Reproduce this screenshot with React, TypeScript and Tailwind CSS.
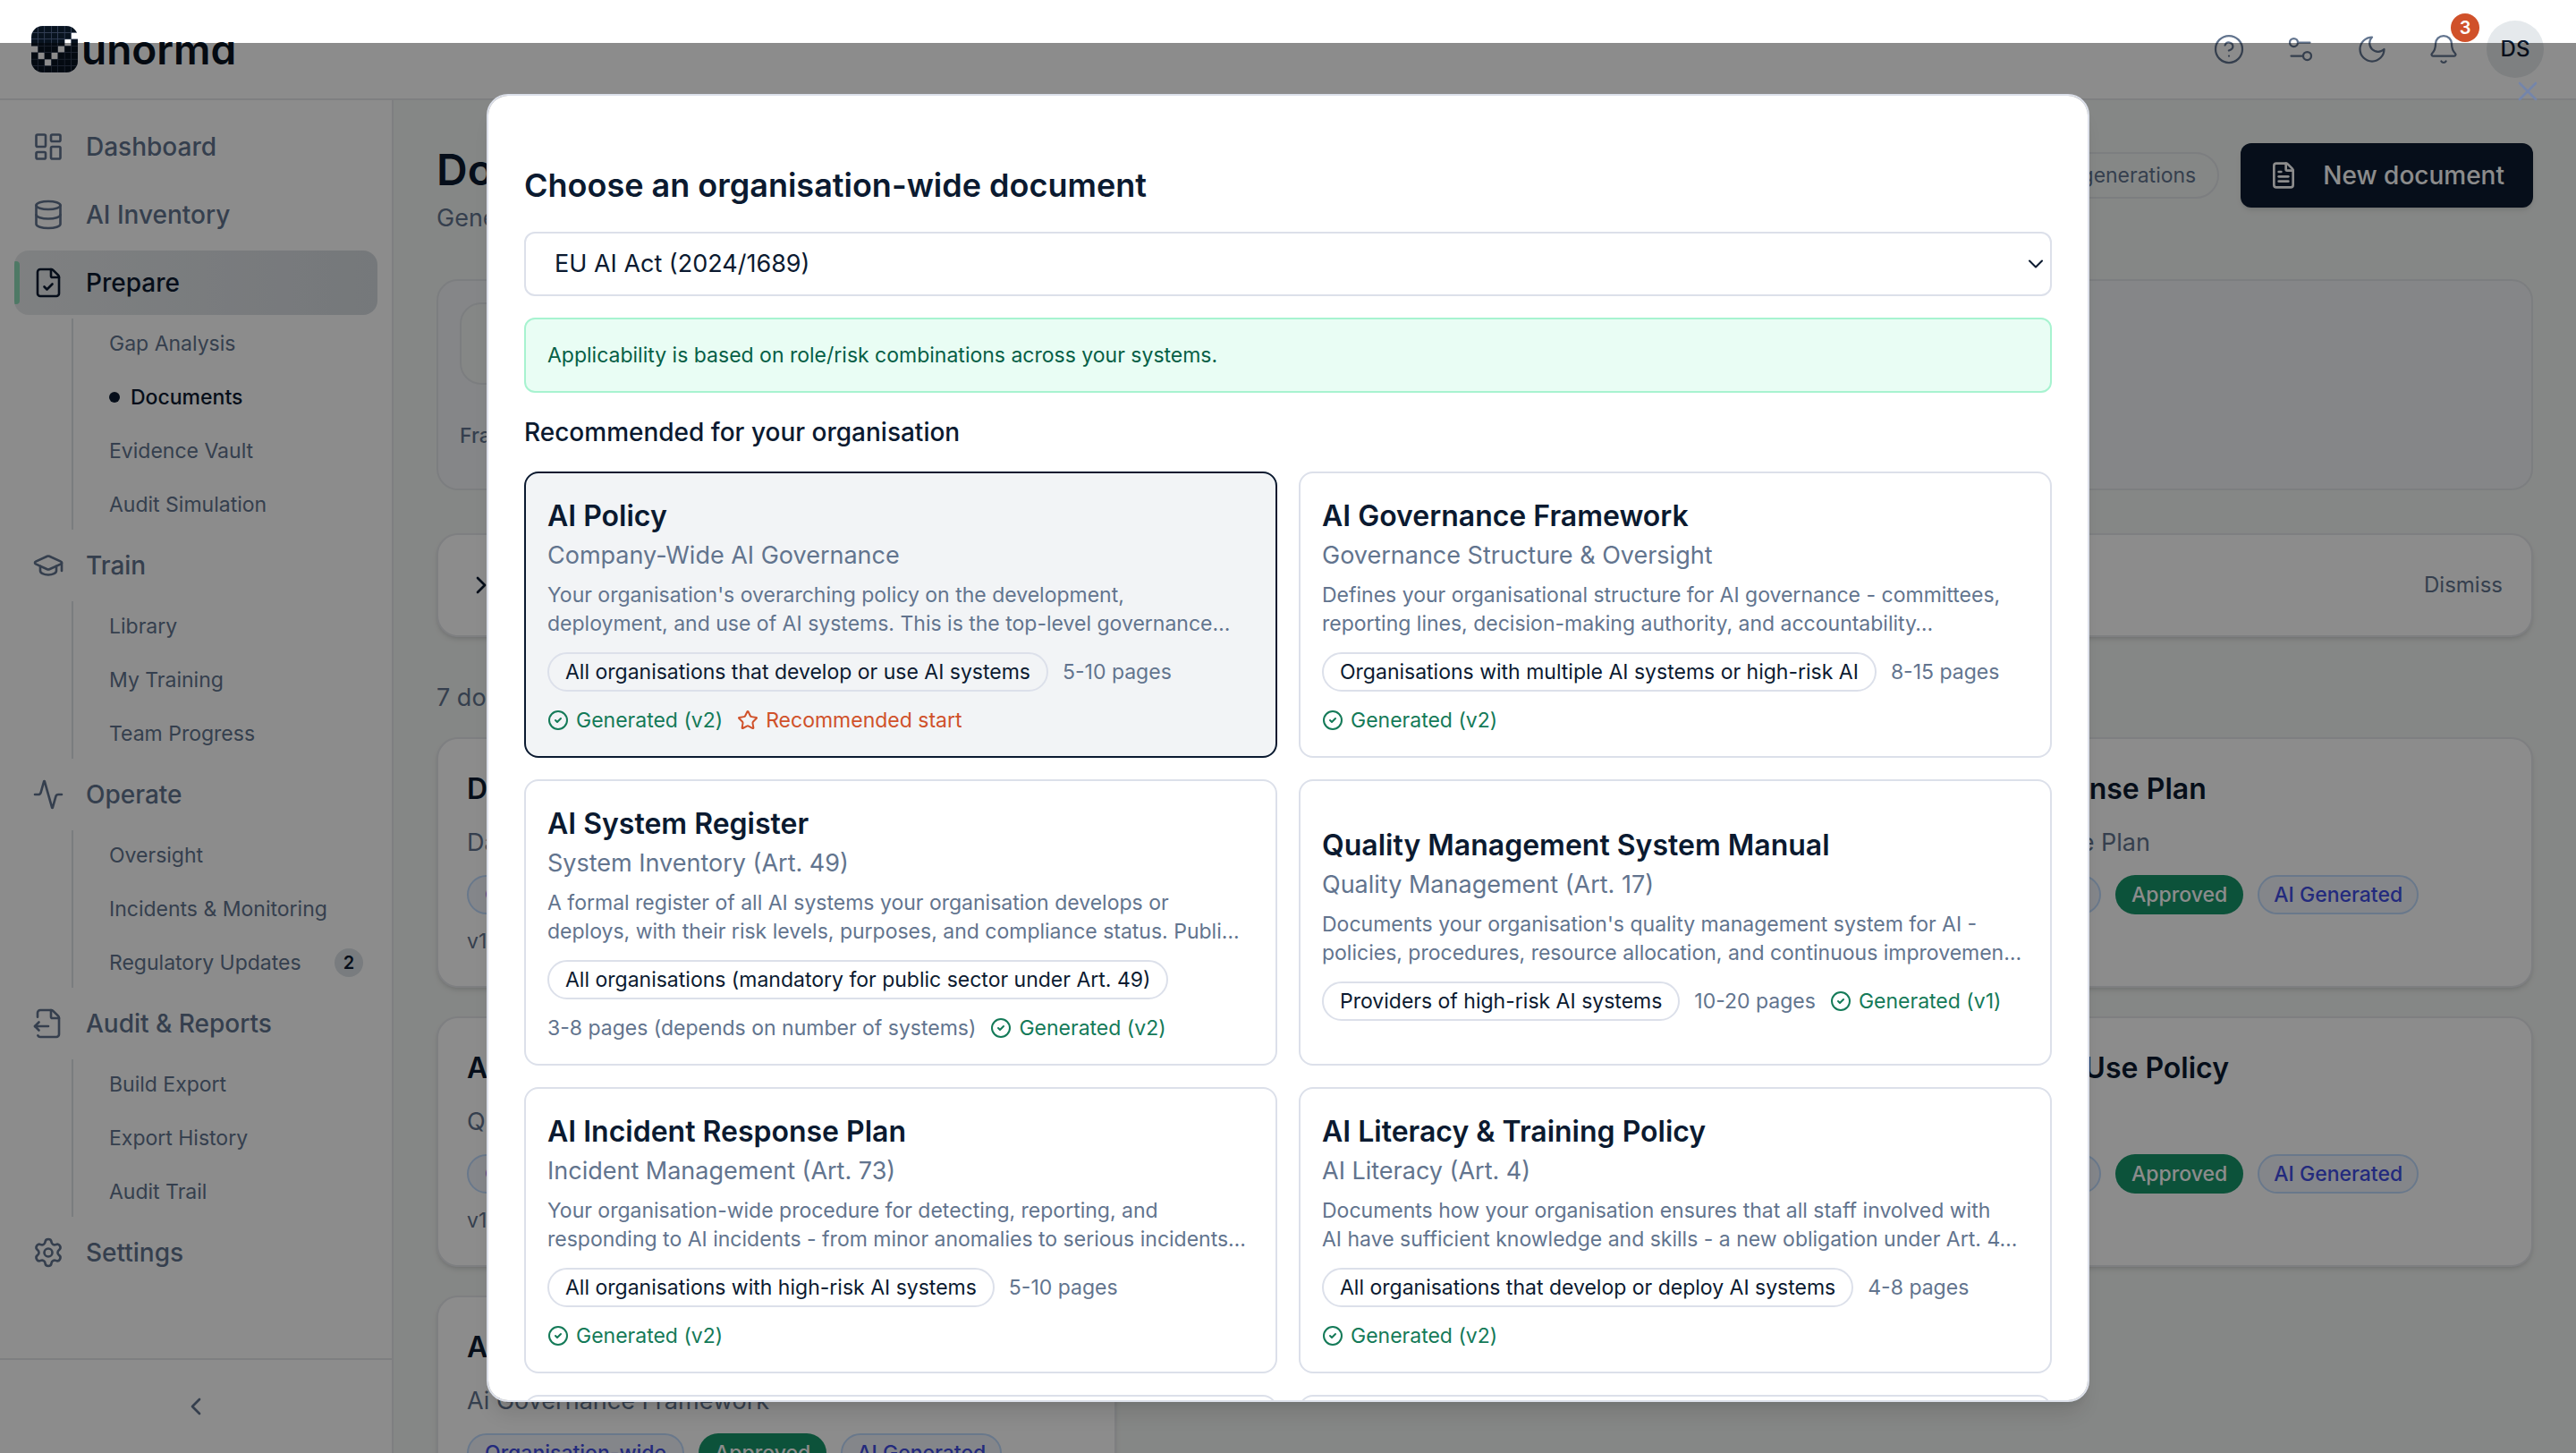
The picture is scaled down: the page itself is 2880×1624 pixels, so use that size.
import React from 'react'
import {
  Activity,
  Bell,
  ChevronDown,
  ChevronLeft,
  ChevronRight,
  CircleCheck,
  CircleQuestionMark,
  Database,
  FileCheck,
  FileOutput,
  FileText,
  GraduationCap,
  LayoutDashboard,
  Settings,
  Settings2,
  Star,
  X,
  type LucideIcon,
} from 'lucide-react'

interface NavSection {
  label: string
  icon: LucideIcon
  active?: boolean
  children?: { label: string; active?: boolean; badge?: string }[]
}

interface TemplateOption {
  title: string
  category: string
  description: string
  audience: string
  pages: string
  version: string
  selected?: boolean
  recommended?: boolean
}

interface DocumentItem {
  title: string
  subtitle: string
}

const navigation: NavSection[] = [
  { label: 'Dashboard', icon: LayoutDashboard },
  { label: 'AI Inventory', icon: Database },
  {
    label: 'Prepare',
    icon: FileCheck,
    active: true,
    children: [
      { label: 'Gap Analysis' },
      { label: 'Documents', active: true },
      { label: 'Evidence Vault' },
      { label: 'Audit Simulation' },
    ],
  },
  {
    label: 'Train',
    icon: GraduationCap,
    children: [{ label: 'Library' }, { label: 'My Training' }, { label: 'Team Progress' }],
  },
  {
    label: 'Operate',
    icon: Activity,
    children: [
      { label: 'Oversight' },
      { label: 'Incidents & Monitoring' },
      { label: 'Regulatory Updates', badge: '2' },
    ],
  },
  {
    label: 'Audit & Reports',
    icon: FileOutput,
    children: [{ label: 'Build Export' }, { label: 'Export History' }, { label: 'Audit Trail' }],
  },
  { label: 'Settings', icon: Settings },
]

const documents: DocumentItem[] = [
  { title: 'Data Governance Policy', subtitle: 'Data Governance Policy' },
  { title: 'AI System Register', subtitle: 'Ai System Register' },
  { title: 'Incident Response Plan', subtitle: 'Incident Response Plan' },
  { title: 'AI Quality Management', subtitle: 'Quality Management' },
  { title: 'AI Literacy Policy', subtitle: 'Ai Literacy Policy' },
  { title: 'AI Acceptable Use Policy', subtitle: '' },
  { title: 'AI Governance Framework', subtitle: 'Ai Governance Framework' },
]

const templates: TemplateOption[] = [
  {
    title: 'AI Policy',
    category: 'Company-Wide AI Governance',
    description:
      "Your organisation's overarching policy on the development,\ndeployment, and use of AI systems. This is the top-level governance…",
    audience: 'All organisations that develop or use AI systems',
    pages: '5-10 pages',
    version: 'v2',
    selected: true,
    recommended: true,
  },
  {
    title: 'AI Governance Framework',
    category: 'Governance Structure & Oversight',
    description:
      'Defines your organisational structure for AI governance - committees,\nreporting lines, decision-making authority, and accountability…',
    audience: 'Organisations with multiple AI systems or high-risk AI',
    pages: '8-15 pages',
    version: 'v2',
  },
  {
    title: 'AI System Register',
    category: 'System Inventory (Art. 49)',
    description:
      'A formal register of all AI systems your organisation develops or\ndeploys, with their risk levels, purposes, and compliance status. Publi…',
    audience: 'All organisations (mandatory for public sector under Art. 49)',
    pages: '3-8 pages (depends on number of systems)',
    version: 'v2',
  },
  {
    title: 'Quality Management System Manual',
    category: 'Quality Management (Art. 17)',
    description:
      "Documents your organisation's quality management system for AI -\npolicies, procedures, resource allocation, and continuous improvemen…",
    audience: 'Providers of high-risk AI systems',
    pages: '10-20 pages',
    version: 'v1',
  },
  {
    title: 'AI Incident Response Plan',
    category: 'Incident Management (Art. 73)',
    description:
      'Your organisation-wide procedure for detecting, reporting, and\nresponding to AI incidents - from minor anomalies to serious incidents…',
    audience: 'All organisations with high-risk AI systems',
    pages: '5-10 pages',
    version: 'v2',
  },
  {
    title: 'AI Literacy & Training Policy',
    category: 'AI Literacy (Art. 4)',
    description:
      'Documents how your organisation ensures that all staff involved with\nAI have sufficient knowledge and skills - a new obligation under Art. 4…',
    audience: 'All organisations that develop or deploy AI systems',
    pages: '4-8 pages',
    version: 'v2',
  },
]

// [column, row] of the open cells in the 7x7 logo grid
const logoGaps = [
  [6, 1],
  [5, 2],
  [4, 3],
  [0, 3],
  [1, 4],
  [3, 4],
  [2, 5],
]

function LogoMark() {
  const cells = []
  for (let row = 0; row < 7; row++) {
    for (let col = 0; col < 7; col++) {
      if (logoGaps.some(([c, r]) => c === col && r === row)) continue
      cells.push(<rect key={`${col}-${row}`} x={col * 10} y={row * 10} width="10" height="10" />)
    }
  }
  return (
    <svg viewBox="0 0 70 70" className="size-13" aria-hidden="true">
      <clipPath id="logo-clip">
        <rect width="70" height="70" rx="17" />
      </clipPath>
      <g clipPath="url(#logo-clip)" fill="#08131f" stroke="#34425f" strokeWidth="0.6">
        {cells}
      </g>
    </svg>
  )
}

function MoonIcon() {
  return (
    <svg
      viewBox="0 0 24 24"
      className="size-9"
      fill="none"
      stroke="currentColor"
      strokeWidth="1.5"
      strokeLinecap="round"
      strokeLinejoin="round"
      aria-hidden="true"
    >
      <path d="M12 3a6 6 0 0 0 9 9 9 9 0 1 1-9-9Z" />
    </svg>
  )
}

function Header() {
  return (
    <header className="flex h-28 shrink-0 items-center justify-between border-b-2 border-[#e5e7eb] bg-white pr-9 pl-[35px]">
      <a href="#" className="flex items-center gap-1 text-[#08131f]">
        <LogoMark />
        <span className="text-[46px] leading-none font-semibold [font-feature-settings:'cv11']">unorma</span>
      </a>
      <div className="flex items-center gap-4 text-slate-500">
        <button aria-label="Help" className="flex size-16 items-center justify-center">
          <CircleQuestionMark className="size-9" strokeWidth={1.5} />
        </button>
        <button aria-label="Preferences" className="flex size-16 items-center justify-center">
          <Settings2 className="size-9" strokeWidth={1.5} />
        </button>
        <button aria-label="Dark mode" className="flex size-16 items-center justify-center">
          <MoonIcon />
        </button>
        <button aria-label="Notifications" className="relative flex size-16 items-center justify-center">
          <Bell className="size-9" strokeWidth={1.5} />
          <span className="absolute -top-2 -right-2 flex size-8 items-center justify-center rounded-full bg-[#d0512a] text-xl font-semibold text-white">
            3
          </span>
        </button>
        <button className="flex size-16 items-center justify-center rounded-full bg-[#e5e9ec] text-2xl font-medium text-[#0b1a30]">
          DS
        </button>
      </div>
    </header>
  )
}

function Sidebar() {
  return (
    <aside className="flex w-110 shrink-0 flex-col border-r-2 border-[#e5e7eb] bg-white">
      <nav className="flex flex-1 flex-col gap-1 p-4">
        {navigation.map((section) => {
          const Icon = section.icon
          return (
            <React.Fragment key={section.label}>
              <a
                href="#"
                className={
                  section.active
                    ? 'relative flex h-18 items-center gap-6 overflow-hidden rounded-2xl bg-linear-to-r from-[#e7eaec] to-[#d6dbe0] px-5 text-[28px] font-medium text-[#0b1a30]'
                    : 'flex h-18 items-center gap-6 px-5 text-[28px] font-medium text-slate-500'
                }
              >
                {section.active && <span className="absolute top-3 left-0 h-12 w-1.5 rounded-r bg-[#8fdcb9]" />}
                <Icon className="size-9 shrink-0" strokeWidth={1.75} />
                {section.label}
              </a>
              {section.children && (
                <div className="ml-16 flex flex-col gap-1 border-l-2 border-[#dfe3e8] pl-10">
                  {section.children.map((child) => (
                    <a
                      key={child.label}
                      href="#"
                      className={
                        child.active
                          ? 'flex h-14 items-center gap-3 pr-4 text-[23px] font-medium text-[#0b1a30]'
                          : 'flex h-14 items-center justify-between text-[23px] text-slate-500'
                      }
                    >
                      {child.active && <span className="size-3 rounded-full bg-[#0b1a30]" />}
                      {child.label}
                      {child.badge && (
                        <span className="mr-4 flex size-8 items-center justify-center rounded-full bg-[#dde2e7] text-xl font-semibold text-[#0b1a30]">
                          {child.badge}
                        </span>
                      )}
                    </a>
                  ))}
                </div>
              )}
            </React.Fragment>
          )
        })}
      </nav>
      <button
        aria-label="Collapse sidebar"
        className="flex h-[106px] items-center justify-center border-t-2 border-[#e5e7eb] text-slate-500"
      >
        <ChevronLeft className="size-8" />
      </button>
    </aside>
  )
}

function DocumentCard({ title, subtitle }: DocumentItem) {
  return (
    <article className="rounded-3xl border-2 border-[#e5e7eb] bg-white p-8 shadow-md">
      <h3 className="text-[32px] leading-12 font-semibold text-[#0b1a30]">{title}</h3>
      <p className="mt-4 h-10 text-[27px] leading-10 text-slate-500">{subtitle}</p>
      <div className="mt-4 flex gap-4 text-[23px] font-medium">
        <span className="flex h-11 items-center rounded-full border-2 border-[#bfdbfe] bg-[#f1f4fb] px-[18px] text-[#404de4]">
          Organisation-wide
        </span>
        <span className="flex h-11 items-center rounded-full bg-[#17966a] px-[18px] text-white">Approved</span>
        <span className="flex h-11 items-center rounded-full border-2 border-[#bfdbfe] bg-[#f1f4fb] px-4 text-[#404de4]">
          AI Generated
        </span>
      </div>
      <p className="mt-3 text-[23px] leading-9 text-slate-500">v1</p>
    </article>
  )
}

function DocumentsPage() {
  return (
    <main className="min-w-0 flex-1 overflow-hidden bg-[#f3f6f4] px-12 pt-12">
      <div className="flex h-26 items-start justify-between">
        <div>
          <h1 className="text-[48px] leading-15 font-semibold text-[#0b1a30]">Documents</h1>
          <p className="mt-1 text-[27px] leading-10 text-slate-500">Generate and manage compliance documents</p>
        </div>
        <div className="flex items-center gap-6">
          <span className="flex h-13 items-center rounded-full border-2 border-[#e2e5e9] px-6 text-[23px] text-slate-500">
            12 of 50 generations
          </span>
          <button className="flex h-18 items-center gap-7 rounded-xl bg-[#0b1a30] px-8 text-[28px] font-medium text-white shadow-md">
            <FileText className="size-8" />
            New document
          </button>
        </div>
      </div>

      <section className="mt-12 h-59 rounded-3xl border-2 border-[#e2e5e9] bg-[#f3f5f7] p-6">
        <div className="flex h-23 w-2/3 items-center rounded-3xl border-2 border-[#e2e5e9] bg-[#f3f6f4] px-8 text-[23px] text-slate-500">
          Search documents
        </div>
        <p className="mt-10 text-[23px] font-medium text-slate-500">Framework</p>
      </section>

      <section className="mt-12 flex h-29 items-center justify-between rounded-3xl border-2 border-[#e5e7eb] bg-white px-8 shadow-md">
        <button className="flex items-center gap-4 text-[27px] font-medium text-[#0b1a30]">
          <ChevronRight className="size-8" />
          Getting started with documents
        </button>
        <button className="text-[24px] text-slate-500">Dismiss</button>
      </section>

      <p className="mt-12 text-[27px] leading-10 text-slate-500">7 documents</p>

      <div className="mt-6 grid grid-cols-3 gap-8">
        {documents.map((doc) => (
          <DocumentCard key={doc.title} {...doc} />
        ))}
      </div>
    </main>
  )
}

function TemplateCard({ template }: { template: TemplateOption }) {
  return (
    <button
      className={
        template.selected
          ? 'flex min-h-80 flex-col justify-center rounded-2xl border-2 border-[#0b1a30] bg-[#f2f4f6] p-6 text-left'
          : 'flex min-h-80 flex-col justify-center rounded-2xl border-2 border-[#dce0ea] bg-white p-6 text-left'
      }
    >
      <span className="text-[32px] leading-12 font-semibold text-[#0b1a30]">{template.title}</span>
      <span className="text-[27px] leading-10 text-slate-500">{template.category}</span>
      <span className="mt-2 line-clamp-2 text-[23px] leading-8 whitespace-pre-line text-slate-500">
        {template.description}
      </span>
      <span className="mt-4 flex flex-wrap items-center gap-4 text-[23px] leading-8">
        <span className="flex h-11 items-center rounded-full border-2 border-[#dce0ea] px-[18px] text-[#0b1a30]">
          {template.audience}
        </span>
        <span className="text-slate-500">{template.pages}</span>
        <span className="flex items-center gap-2 text-[#147a58]">
          <CircleCheck className="size-6" />
          Generated ({template.version})
        </span>
        {template.recommended && (
          <span className="flex items-center gap-2 text-[#d0512a]">
            <Star className="size-6" />
            Recommended start
          </span>
        )}
      </span>
    </button>
  )
}

function ChooseDocumentModal() {
  return (
    <div className="fixed inset-x-0 top-12 bottom-0 flex justify-center bg-black/45 py-[57px]">
      <button aria-label="Close" className="absolute top-9 right-9 text-[#7485aa]">
        <X className="size-9" strokeWidth={1.75} />
      </button>
      <div
        role="dialog"
        aria-modal="true"
        aria-labelledby="modal-title"
        className="w-full max-w-448 overflow-y-auto rounded-3xl border-2 border-[#dce0ea] bg-white px-10 pt-20 pb-10 shadow-xl [scrollbar-width:none]"
      >
        <h2 id="modal-title" className="text-[36px] leading-10 font-semibold text-[#0b1a30]">
          Choose an organisation-wide document
        </h2>
        <div className="relative mt-8">
          <select
            aria-label="Framework"
            className="h-18 w-full appearance-none rounded-xl border-2 border-[#dce0ea] bg-white px-8 text-[27px] text-[#0b1a30]"
          >
            <option>EU AI Act (2024/1689)</option>
          </select>
          <ChevronDown
            className="pointer-events-none absolute inset-y-0 right-1 my-auto size-7 text-[#0b1a30]"
            strokeWidth={1.75}
          />
        </div>
        <div className="mt-6 flex h-21 items-center rounded-xl border-2 border-[#a7f3d0] bg-[#e9fdf4] px-6 text-[23px] text-[#065f46]">
          Applicability is based on role/risk combinations across your systems.
        </div>
        <h3 className="mt-6 text-[28px] leading-10 font-medium text-[#0b1a30]">Recommended for your organisation</h3>
        <div className="mt-6 grid grid-cols-2 gap-6">
          {templates.map((template) => (
            <TemplateCard key={template.title} template={template} />
          ))}
          <div className="h-80 rounded-2xl border-2 border-[#dce0ea]" />
          <div className="h-80 rounded-2xl border-2 border-[#dce0ea]" />
        </div>
      </div>
    </div>
  )
}

export default function App() {
  return (
    <div className="flex h-screen flex-col overflow-hidden bg-white font-['Inter',sans-serif]">
      <Header />
      <div className="flex min-h-0 flex-1">
        <Sidebar />
        <DocumentsPage />
      </div>
      <ChooseDocumentModal />
    </div>
  )
}
